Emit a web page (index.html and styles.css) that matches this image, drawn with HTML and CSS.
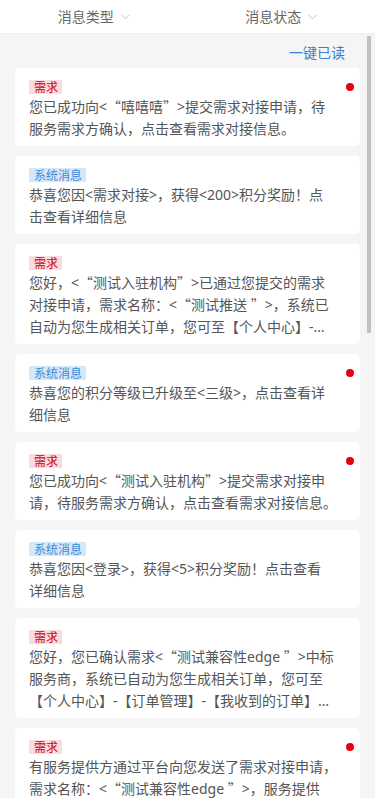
FILE: index.html
```html
<!DOCTYPE html>
<html lang="zh-CN">
<head>
<meta charset="utf-8">
<title>消息</title>
<link rel="stylesheet" href="styles.css">
</head>
<body>
<header class="filters">
  <div class="filter"><span>消息类型</span><svg class="chev" width="9" height="6" viewBox="0 0 9 6"><path d="M0.5 0.8 L4.5 4.8 L8.5 0.8" fill="none" stroke="#c4c4c4" stroke-width="1"/></svg></div>
  <div class="filter"><span>消息状态</span><svg class="chev" width="9" height="6" viewBox="0 0 9 6"><path d="M0.5 0.8 L4.5 4.8 L8.5 0.8" fill="none" stroke="#c4c4c4" stroke-width="1"/></svg></div>
</header>
<main class="list">
  <div class="actions"><a class="read-all">一键已读</a></div>

  <div class="card">
    <span class="tag tag-demand">需求</span>
    <p class="msg">您已成功向&lt;<span class="q">“</span>嘻嘻嘻<span class="q">”</span>&gt;提交需求对接申请，待<br>服务需求方确认，点击查看需求对接信息。</p>
    <i class="dot"></i>
  </div>

  <div class="card">
    <span class="tag tag-system">系统消息</span>
    <p class="msg">恭喜您因&lt;需求对接&gt;，获得&lt;200&gt;积分奖励！点<br>击查看详细信息</p>
  </div>

  <div class="card">
    <span class="tag tag-demand">需求</span>
    <p class="msg">您好，&lt;<span class="q">“</span>测试入驻机构<span class="q">”</span>&gt;已通过您提交的需求<br>对接申请，需求名称：&lt;<span class="q">“</span>测试推送 <span class="q">”</span>&gt;，系统已<br>自动为您生成相关订单，您可至【个人中心】-【订单管理】-【我收到的订单】中查看订单详情。</p>
  </div>

  <div class="card">
    <span class="tag tag-system">系统消息</span>
    <p class="msg">恭喜您的积分等级已升级至&lt;三级&gt;，点击查看详<br>细信息</p>
    <i class="dot"></i>
  </div>

  <div class="card">
    <span class="tag tag-demand">需求</span>
    <p class="msg">您已成功向&lt;<span class="q">“</span>测试入驻机构<span class="q">”</span>&gt;提交需求对接申<br>请，待服务需求方确认，点击查看需求对接信息。</p>
    <i class="dot"></i>
  </div>

  <div class="card">
    <span class="tag tag-system">系统消息</span>
    <p class="msg">恭喜您因&lt;登录&gt;，获得&lt;5&gt;积分奖励！点击查看<br>详细信息</p>
  </div>

  <div class="card">
    <span class="tag tag-demand">需求</span>
    <p class="msg">您好，您已确认需求&lt;<span class="q">“</span>测试兼容性edge <span class="q">”</span>&gt;中标<br>服务商，系统已自动为您生成相关订单，您可至<br>【个人中心】-【订单管理】-【我收到的订单】中查看订单详情。</p>
  </div>

  <div class="card">
    <span class="tag tag-demand">需求</span>
    <p class="msg">有服务提供方通过平台向您发送了需求对接申请，<br>需求名称：&lt;<span class="q">“</span>测试兼容性edge <span class="q">”</span>&gt;，服务提供<br>方正在等待您的确认，请及时处理。</p>
    <i class="dot"></i>
  </div>
  <div class="thumb"></div>
</main>
</body>
</html>
```

FILE: styles.css
```css
* { box-sizing: border-box; }
html, body {
  margin: 0;
  padding: 0;
  background: #f5f5f5;
  font-family: "Noto Sans CJK SC", "Noto Sans", sans-serif;
  height: 798px;
  overflow: hidden;
}
.filters {
  display: flex;
  height: 33px;
  background: #fff;
  box-shadow: 0 1px 2px rgba(0,0,0,0.03);
  position: relative;
  z-index: 1;
}
.filter {
  flex: 1;
  display: flex;
  align-items: center;
  justify-content: center;
  gap: 7px;
  font-size: 14px;
  color: #666;
  line-height: 33px;
}
.chev { display: block; margin-top: 1px; }
.list {
  padding: 0 15px;
}
.actions {
  display: flex;
  justify-content: flex-end;
  height: 35px;
  align-items: center;
  padding-right: 15px;
  padding-top: 2px;
}
.read-all {
  font-size: 14px;
  color: #3b7fd0;
  line-height: 20px;
}
.card {
  position: relative;
  display: flex;
  flex-direction: column;
  align-items: flex-start;
  background: #fff;
  border-radius: 5px;
  padding: 12px 21px 6px 14px;
  margin-bottom: 10px;
}
.tag {
  display: block;
  font-size: 12px;
  line-height: 14px;
  height: 14px;
  padding: 0 4px 0 5px;
}
.tag-demand { background: #fadcdc; color: #d0021b; }
.tag-system { background: #d5e8f8; color: #3d8ad6; }
.msg {
  margin: 2px 0 0;
  width: 100%;
  font-family: "Noto Sans", "Noto Sans CJK SC", sans-serif;
  font-size: 14px;
  line-height: 22px;
  color: #555;
  display: -webkit-box;
  -webkit-box-orient: vertical;
  -webkit-line-clamp: 3;
  overflow: hidden;
}
.q {
  font-family: "Noto Sans CJK SC", sans-serif;
  font-feature-settings: "fwid" 1;
  line-height: 14px;
}
.dot {
  position: absolute;
  top: 15px;
  right: 6px;
  width: 8px;
  height: 8px;
  border-radius: 50%;
  background: #e60012;
}
.thumb {
  position: absolute;
  left: 367px;
  top: 36px;
  width: 4px;
  height: 297px;
  background: #c1c1c1;
}
```
